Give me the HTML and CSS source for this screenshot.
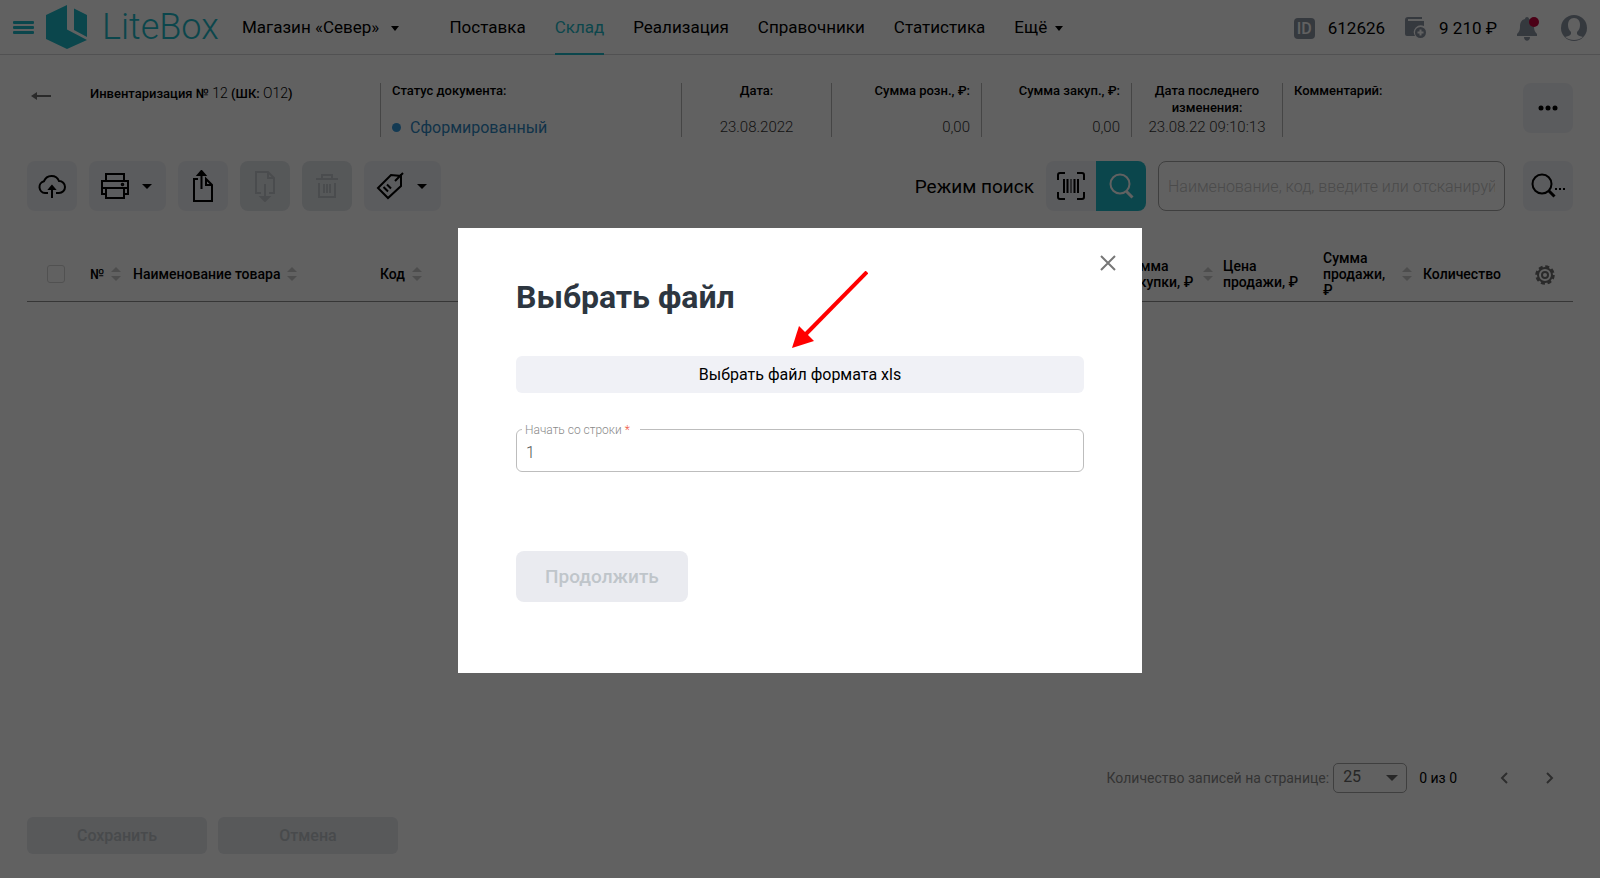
FILE: index.html
```
<!DOCTYPE html>
<html lang="ru">
<head>
  <meta charset="UTF-8">
  <meta name="viewport" content="width=device-width, initial-scale=1.0">
  <title>LiteBox - Инвентаризация</title>
  <link rel="stylesheet" href="styles.css">
</head>
<body>
  <div class="page">
    <header class="header">
      <button class="burger" aria-label="Меню"><span></span><span></span><span></span></button>
      <a class="logo" href="#">
        <svg width="42" height="44" viewBox="0 0 42 44"><path d="M21 0 0 10v24l21 10 20-9-20-10.500z"/><path d="M28 3.500 41 10v22L28 25z"/></svg>
        <span>LiteBox</span>
      </a>
      <button class="shop">Магазин «Север» <i class="caret"></i></button>
      <nav class="nav">
        <a href="#">Поставка</a>
        <a href="#" class="active">Склад</a>
        <a href="#">Реализация</a>
        <a href="#">Справочники</a>
        <a href="#">Статистика</a>
        <a href="#">Ещё <i class="caret"></i></a>
      </nav>
      <div class="account">
        <span class="id-badge">ID</span>
        <span class="account-id">612626</span>
        <svg class="wallet" width="22" height="22" viewBox="0 0 22 22">
          <path fill="#8c95a3" d="M3 0h14v2H3v2h16v5a7 7 0 0 0-9 10H2a2 2 0 0 1-2-2V3a3 3 0 0 1 3-3z"/>
          <circle cx="15.500" cy="15.500" r="5.500" fill="#8c95a3"/>
          <path d="M15.500 12.500v6M12.500 15.500h6" stroke="#fff" stroke-width="2"/>
        </svg>
        <span class="balance">9 210 ₽</span>
        <button class="bell" aria-label="Уведомления">
          <svg width="24" height="25" viewBox="0 0 24 25">
            <path fill="#8c95a3" d="M10 1c1 0 2 .700 2 2 4 1 5 4 5 8 0 3 1 5 3 7v2H0v-2c2-2 3-4 3-7 0-4 1-7 5-8 0-1.300 1-2 2-2zM7 21h6c0 5-6 5-6 0z"/>
            <circle cx="17" cy="6" r="5" fill="#c4003c"/>
          </svg>
        </button>
        <button class="avatar" aria-label="Профиль">
          <svg width="26" height="26" viewBox="0 0 26 26">
            <circle cx="13" cy="13" r="13" fill="#8c95a3"/>
            <path fill="#fff" d="M13 3c4 0 6 3 6 7 0 3-1 5-3 7v2c1 2 4 2 6 3-5 4-13 4-18 0 2-1 5-1 6-3v-2c-2-2-3-4-3-7 0-4 2-7 6-7z"/>
          </svg>
        </button>
      </div>
    </header>

    <main class="content">
      <section class="doc">
        <button class="back" aria-label="Назад">
          <svg width="20" height="10" viewBox="0 0 20 10"><path d="M0 5 6 1v8z" fill="#6e6e6e"/><path d="M4 5h16" stroke="#6e6e6e" stroke-width="2"/></svg>
        </button>
        <h1 class="doc-title">Инвентаризация № <span>12</span> (ШК: <span>О12</span>)</h1>
        <div class="doc-cell">
          <b>Статус документа:</b>
          <span class="status">Сформированный</span>
        </div>
        <div class="doc-cell center"><b>Дата:</b><span>23.08.2022</span></div>
        <div class="doc-cell right"><b>Сумма розн., ₽:</b><span>0,00</span></div>
        <div class="doc-cell right"><b>Сумма закуп., ₽:</b><span>0,00</span></div>
        <div class="doc-cell center"><b>Дата последнего изменения:</b><span>23.08.22 09:10:13</span></div>
        <div class="doc-cell"><b>Комментарий:</b></div>
        <button class="btn" aria-label="Ещё">
          <svg width="20" height="6" viewBox="0 0 20 6"><circle cx="3" cy="3" r="2.500"/><circle cx="10" cy="3" r="2.500"/><circle cx="17" cy="3" r="2.500"/></svg>
        </button>
      </section>

      <section class="toolbar">
        <button class="btn" aria-label="Загрузить">
          <svg class="icon" width="28" height="24" viewBox="0 0 28 24"><path d="M10 19H7a6 6 0 0 1-1-11.800A8 8 0 0 1 21 7a6 6 0 0 1 0 12h-3M14 24V13"/><path d="m14 12-2.500 3h5z" fill="currentColor"/></svg>
        </button>
        <button class="btn wide" aria-label="Печать">
          <svg class="icon" width="28" height="26" viewBox="0 0 28 26"><path d="M5 8V1h18v7M5 21H1V8h26v13h-4M1 15h26M5 16v9h18v-9"/><circle cx="21.500" cy="11.500" r=".8"/></svg>
          <i class="caret big"></i>
        </button>
        <button class="btn" aria-label="Экспорт">
          <svg class="icon" width="22" height="32" viewBox="0 0 22 32"><path d="M6 9H2v22h18V15l-6-6v6h6M9.500 19V3"/><path d="M9.500 1 6 5h7z" fill="currentColor"/></svg>
        </button>
        <button class="btn" aria-label="Импорт" disabled>
          <svg class="icon" width="22" height="32" viewBox="0 0 22 32"><path d="M7 23H2V2h12l6 6v15h-5M14 2v6h6M11 14v14"/><path d="m11 31-4-4h8z" fill="currentColor"/></svg>
        </button>
        <button class="btn" aria-label="Удалить" disabled>
          <svg class="icon" width="24" height="26" viewBox="0 0 24 26"><path d="M1 6h22M7 6V2h10v4M4 10v14h16V10M9 11v9M12 11v9M15 11v9"/></svg>
        </button>
        <button class="btn wide" aria-label="Ценники">
          <svg class="icon" width="28" height="28" viewBox="0 0 28 28"><path d="M2 16 15 3l10 1v10L12 26zM19 9l8-8M11 12.500l4 4M7.500 15l4.500 4.500"/></svg>
          <i class="caret big"></i>
        </button>

        <span class="mode">Режим поиск</span>
        <div class="switch">
          <button class="btn" aria-label="Сканер">
            <svg class="icon" width="28" height="28" viewBox="0 0 28 28"><path d="M1 8V3a2 2 0 0 1 2-2h5M20 1h5a2 2 0 0 1 2 2v5M27 20v5a2 2 0 0 1-2 2h-5M8 27H3a2 2 0 0 1-2-2v-5M7 7v14M10.500 7v14M17.500 7v14M21 7v14"/><path d="M14 7v14" stroke-width="1"/></svg>
          </button>
          <button class="btn on" aria-label="Поиск">
            <svg class="icon" width="26" height="26" viewBox="0 0 26 26"><circle cx="12" cy="11" r="9.500"/><path d="m18.500 18.500 6 6" stroke-width="3"/></svg>
          </button>
        </div>
        <input class="search" type="text" aria-label="Поиск товара" placeholder="Наименование, код, введите или отсканируйте">
        <button class="btn find" aria-label="Расширенный поиск">
          <svg class="icon" width="34" height="26" viewBox="0 0 34 26"><circle cx="11" cy="11" r="9.500"/><path d="m17.500 17.500 6 6" stroke-width="3"/><path d="M24 16h2M28 16h2M32 16h2"/></svg>
        </button>
      </section>

      <table class="goods">
        <colgroup>
          <col class="c-check"><col class="c-num"><col class="c-name"><col class="c-code"><col class="c-buy"><col class="c-price"><col class="c-sum"><col class="c-qty"><col class="c-gear">
        </colgroup>
        <thead>
          <tr>
            <th class="check"><input type="checkbox" aria-label="Выбрать все"></th>
            <th><div>№ <i class="sort"></i></div></th>
            <th><div>Наименование товара <i class="sort"></i></div></th>
            <th><div>Код <i class="sort"></i></div></th>
            <th><div><span class="narrow">Сумма закупки, ₽</span> <i class="sort"></i></div></th>
            <th><div class="price">Цена продажи, ₽</div></th>
            <th><div><span class="narrow">Сумма продажи, ₽</span> <i class="sort"></i></div></th>
            <th><div>Количество</div></th>
            <th class="gear">
              <button aria-label="Настройки">
                <svg width="20" height="20" viewBox="0 0 20 20" fill="none" stroke="#6e6e6e"><circle cx="10" cy="10" r="8.500" stroke-width="2.500" stroke-dasharray="4 2.675"/><circle cx="10" cy="10" r="7" stroke-width="2"/><circle cx="10" cy="10" r="3" stroke-width="2"/></svg>
              </button>
            </th>
          </tr>
        </thead>
      </table>

      <div class="pager">
        <label for="per-page">Количество записей на странице:</label>
        <div class="per-page">
          <select id="per-page"><option>25</option><option>50</option></select>
          <i class="caret big"></i>
        </div>
        <span class="range">0 из 0</span>
        <button aria-label="Назад"><svg width="8" height="12" viewBox="0 0 8 12"><path d="M7 1 2 6l5 5"/></svg></button>
        <button aria-label="Вперёд"><svg width="8" height="12" viewBox="0 0 8 12"><path d="m1 1 5 5-5 5"/></svg></button>
      </div>

      <footer class="actions">
        <button disabled>Сохранить</button>
        <button disabled>Отмена</button>
      </footer>
    </main>
  </div>

  <div class="overlay">
    <div class="dialog" role="dialog" aria-modal="true" aria-labelledby="dialog-title">
      <button class="close" aria-label="Закрыть">
        <svg width="16" height="16" viewBox="0 0 16 16"><path d="m1 1 14 14M15 1 1 15"/></svg>
      </button>
      <h2 id="dialog-title">Выбрать файл</h2>
      <button class="choose">Выбрать файл формата xls</button>
      <fieldset class="field">
        <legend><label for="start-row">Начать со строки <em>*</em></label></legend>
        <input id="start-row" type="text" value="1">
      </fieldset>
      <button class="next" disabled>Продолжить</button>
      <svg class="pointer" width="76" height="78" viewBox="0 0 76 78"><path d="M75 1 12 65" stroke="#f00" stroke-width="4"/><path d="M0 77 7 55l15 15z" fill="#f00"/></svg>
    </div>
  </div>
</body>
</html>
```
FILE: styles.css
```
* { box-sizing: border-box; }
body {
  margin: 0;
  font-family: Roboto, "Liberation Sans", sans-serif;
  font-size: 16px;
  color: #000;
  background: #fff;
}
button, input, select {
  font: inherit;
  color: inherit;
}
button {
  padding: 0;
  border: 0;
  background: none;
  cursor: pointer;
}
a {
  color: inherit;
  text-decoration: none;
}
svg { display: block; }
.page {
  display: flex;
  flex-direction: column;
  min-height: 100vh;
}

/* header */
.header {
  display: flex;
  align-items: center;
  height: 55px;
  padding: 0 13px;
  border-bottom: 1px solid #d5d5d8;
  font-size: 17px;
  white-space: nowrap;
}
.burger {
  display: grid;
  gap: 2px;
  width: 21px;
  margin-right: 12px;
}
.burger span {
  height: 3px;
  border-radius: 1px;
  background: #1fb9c8;
}
.logo {
  display: flex;
  align-items: center;
  gap: 14px;
  width: 196px;
  color: #1fb9c8;
  font-size: 36px;
  font-weight: 300;
}
.logo svg { fill: #1fb9c8; }
.caret {
  display: inline-block;
  margin-left: 8px;
  vertical-align: 2px;
  border: 4px solid transparent;
  border-top: 5px solid #000;
  border-bottom: 0;
}
.caret.big {
  margin: 0;
  border-width: 5px 5px 0;
}
.nav {
  display: flex;
  gap: 29px;
  height: 55px;
  margin-left: 50px;
  line-height: 54px;
}
.nav .caret { margin-left: 4px; }
.nav .active {
  color: #1fb9c8;
  border-bottom: 2px solid #1fb9c8;
}
.account {
  display: flex;
  align-items: center;
  margin-left: auto;
  padding-top: 2px;
}
.id-badge {
  width: 21px;
  border-radius: 4px;
  background: #8c95a3;
  color: #fff;
  font-size: 16px;
  font-weight: 500;
  line-height: 21px;
  text-align: center;
}
.account-id { margin: 0 20px 0 13px; }
.balance { margin: 0 20px 0 12px; }
.bell { margin-right: 20px; }

/* document info */
.content {
  display: flex;
  flex: 1;
  flex-direction: column;
  padding: 28px 27px 24px;
}
.doc {
  display: grid;
  grid-template-columns: 63px 290fr 301fr 150fr 150fr 150fr 151fr 241fr 50px;
  font-size: 13px;
  line-height: 17px;
}
.back {
  align-self: start;
  padding: 8px 4px;
}
.doc-title {
  margin: 2px 0 0;
  font-size: 13px;
  font-weight: 500;
}
.doc-title span {
  font-size: 14px;
  font-weight: 300;
}
.doc-cell {
  display: flex;
  flex-direction: column;
  justify-content: space-between;
  min-height: 54px;
  padding: 0 11px 1px;
  border-left: 1px solid #b5b5b5;
}
.doc-cell b {
  margin-top: -1px;
  font-weight: 500;
}
.doc-cell span {
  color: #333;
  font-size: 15px;
  font-weight: 300;
}
.doc-cell.center { text-align: center; }
.doc-cell.right { text-align: right; }
.doc-cell .status {
  display: flex;
  align-items: center;
  gap: 9px;
  color: #2e86c1;
  font-size: 16px;
  font-weight: 400;
}
.status::before {
  content: "";
  width: 9px;
  height: 9px;
  border-radius: 50%;
  background: #3498db;
}

/* toolbar */
.btn {
  display: flex;
  align-items: center;
  justify-content: center;
  width: 50px;
  height: 50px;
  border-radius: 8px;
  background: #f0f1f6;
}
.btn.wide {
  gap: 13px;
  width: 77px;
  padding-right: 3px;
}
.btn:disabled {
  color: #c3c8cc;
  background: #e3e6ea;
}
.icon {
  fill: none;
  stroke: currentColor;
  stroke-width: 2;
}
.toolbar {
  display: flex;
  align-items: center;
  gap: 12px;
  margin-top: 24px;
}
.mode {
  margin-left: auto;
  font-size: 19px;
}
.switch { display: flex; }
.switch .btn { border-radius: 8px 0 0 8px; }
.switch .btn.on {
  border-radius: 0 8px 8px 0;
  background: #1fb9c8;
  color: #fff;
}
.search {
  width: 347px;
  height: 50px;
  padding: 0 9px;
  border: 1px solid #a5a5a5;
  border-radius: 8px;
  background: #fff;
  font-weight: 300;
}
.search::placeholder { color: #c4c4c4; }
.find { margin-left: 6px; }

/* goods table */
.goods {
  width: 100%;
  margin-top: 36px;
  border-collapse: collapse;
  table-layout: fixed;
}
.goods th {
  height: 54px;
  padding: 0;
  border-bottom: 1px solid #8f8f8f;
  font-size: 14px;
  font-weight: 500;
  line-height: 16px;
  text-align: left;
}
.goods th div {
  display: flex;
  align-items: center;
  gap: 7px;
}
.c-check { width: 63px; }
.c-num { width: 43px; }
.c-name { width: 247px; }
.c-buy { width: 99px; }
.c-price { width: 100px; }
.c-sum { width: 100px; }
.c-qty { width: 112px; }
.c-gear { width: 38px; }
.goods .price { width: 88px; }
.narrow { width: 72px; }
.check input {
  appearance: none;
  display: block;
  width: 18px;
  height: 18px;
  margin: 0 0 0 20px;
  border: 1px solid #d4d4d4;
  border-radius: 3px;
}
.gear button {
  display: block;
  padding-top: 3px;
}
.sort {
  display: grid;
  gap: 4px;
}
.sort::before, .sort::after {
  content: "";
  border: 5px solid transparent;
}
.sort::before {
  border-top: 0;
  border-bottom-color: #cbcbcb;
}
.sort::after {
  border-bottom: 0;
  border-top-color: #cbcbcb;
}

/* pager and bottom buttons */
.pager {
  display: flex;
  align-items: center;
  margin-top: auto;
  color: #8a8a8a;
  font-size: 14px;
}
.per-page {
  display: flex;
  align-items: center;
  width: 74px;
  margin: 0 12px 0 4px;
  border: 1px solid #a5a5a5;
  border-radius: 5px;
}
.pager label { margin-left: auto; }
.per-page select {
  appearance: none;
  flex: 1;
  height: 28px;
  padding: 0 0 3px 9px;
  border: 0;
  background: none;
  color: #666;
  font-size: 16px;
}
.per-page .caret {
  margin-right: 8px;
  border-width: 6px 6px 0;
  border-top-color: #666;
}
.range {
  margin-right: 43px;
  color: #000;
  font-size: 14px;
}
.pager svg {
  fill: none;
  stroke: #777;
  stroke-width: 2;
}
.pager button { width: 8px; }
.pager button:last-child { margin: 0 19px 0 38px; }
.actions {
  display: flex;
  gap: 11px;
  margin-top: 24px;
}
.actions button {
  width: 180px;
  height: 37px;
  border-radius: 6px;
  background: #e6e9ed;
  color: #bdc3c7;
  font-weight: 500;
}

/* dialog */
.overlay {
  position: fixed;
  inset: 0;
  display: flex;
  align-items: center;
  justify-content: center;
  padding-top: 22px;
  background: rgba(0, 0, 0, .62);
}
.dialog {
  position: relative;
  display: flex;
  flex-direction: column;
  width: 684px;
  max-width: 100%;
  padding: 49px 58px 71px;
  background: #fff;
}
.close {
  position: absolute;
  top: 27px;
  right: 26px;
}
.close svg {
  stroke: #777;
  stroke-width: 2;
}
.dialog h2 {
  margin: 0 0 38px;
  color: #2d3640;
  font-size: 32px;
  line-height: 41px;
}
.choose {
  height: 37px;
  border-radius: 6px;
  background: #f0f1f6;
}
.field {
  height: 49px;
  margin: 30px 0 79px;
  padding: 0;
  border: 1px solid #bdbdbd;
  border-radius: 6px;
}
.field legend {
  margin-left: 5px;
  padding: 0 10px 0 3px;
  color: #8a8a8a;
  font-size: 12px;
  font-weight: 300;
  line-height: 14px;
}
.field em {
  color: #f05540;
  font-style: normal;
}
.field input {
  display: block;
  width: 100%;
  height: 32px;
  padding: 0 9px;
  border: 0;
  background: none;
  color: #555;
  font-weight: 300;
}
.next {
  align-self: flex-start;
  height: 51px;
  padding: 0 29px;
  border-radius: 8px;
  background: #eaebf0;
  color: #bfc5ca;
  font-size: 19px;
  font-weight: 500;
}
.pointer {
  position: absolute;
  top: 43px;
  left: 334px;
}
```
